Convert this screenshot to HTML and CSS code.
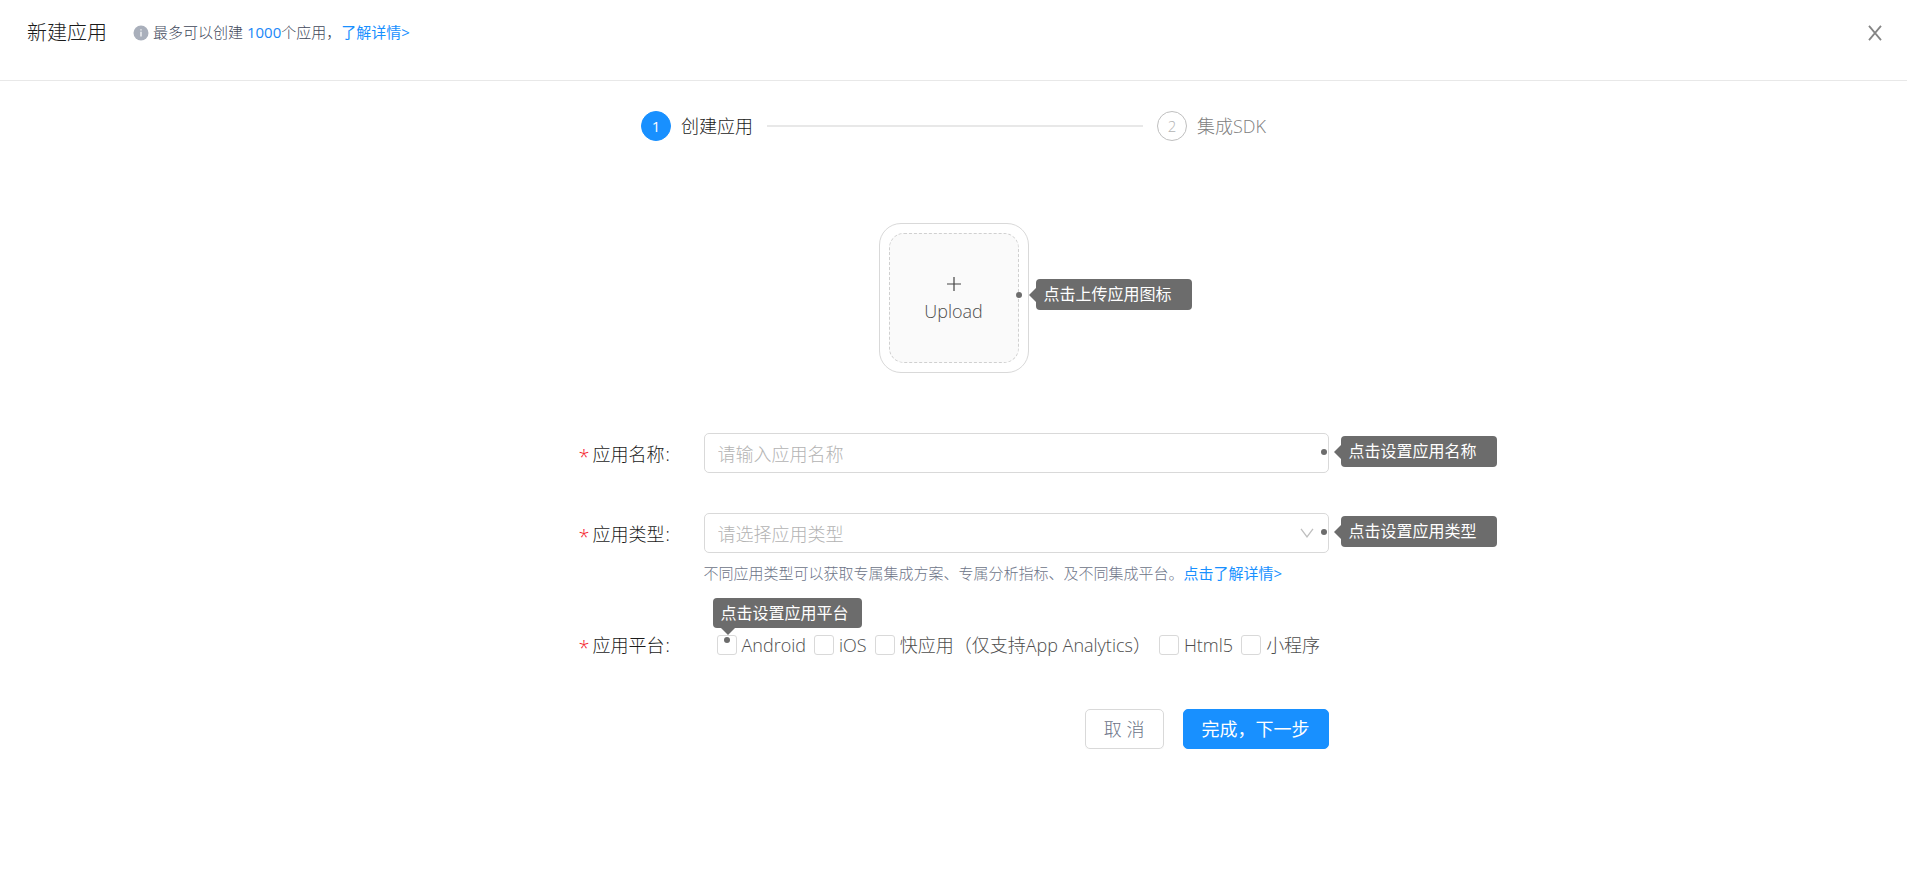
FILE: index.html
```html
<!DOCTYPE html>
<html lang="zh-CN">
<head>
<meta charset="utf-8">
<title>新建应用</title>
<link rel="stylesheet" href="styles.css">
</head>
<body>
<header class="header">
  <h1 class="title">新建应用</h1>
  <p class="quota">
    <svg class="info-icon" viewBox="0 0 16 16" aria-hidden="true"><circle cx="8" cy="8" r="7.5" fill="#a9afbb"/><path d="M8 6.8v4.6M8 4.2v1.4" stroke="#fff" stroke-width="1.2"/></svg>
    <span>最多可以创建 <strong class="count">1000</strong>个应用，<a class="link" href="#">了解详情&gt;</a></span>
  </p>
  <button class="close" type="button" aria-label="关闭"><svg viewBox="0 0 14 16" aria-hidden="true"><path d="M1 .8l12 14.4M13 .8L1 15.2" fill="none" stroke="#858585" stroke-width="1.8"/></svg></button>
</header>
<main class="main">
  <ol class="steps">
    <li class="step step-active"><span class="step-num">1</span><span class="step-name">创建应用</span></li>
    <li class="step-line" aria-hidden="true"></li>
    <li class="step"><span class="step-num">2</span><span class="step-name">集成SDK</span></li>
  </ol>

  <div class="upload-frame">
    <button class="upload" type="button">
      <svg class="plus" viewBox="0 0 14 14" aria-hidden="true"><path d="M7 0v14M0 7h14" stroke="#444" stroke-width="1.2"/></svg>
      <span>Upload</span>
    </button>
    <span class="dot dot-upload"></span>
    <span class="tip tip-side tip-upload">点击上传应用图标</span>
  </div>

  <form class="form">
    <div class="row">
      <label class="label" for="name"><span class="star">*</span>应用名称<span class="colon">:</span></label>
      <div class="control">
        <input class="field" id="name" type="text" placeholder="请输入应用名称">
        <span class="dot dot-field"></span>
        <span class="tip tip-side tip-field">点击设置应用名称</span>
      </div>
    </div>
    <div class="row">
      <label class="label" for="type"><span class="star">*</span>应用类型<span class="colon">:</span></label>
      <div class="control">
        <select class="field select" id="type"><option>请选择应用类型</option></select>
        <svg class="arrow" viewBox="0 0 14 10" aria-hidden="true"><path d="M1 .8l6 8 6-8" fill="none" stroke="#bfbfbf" stroke-width="1.3"/></svg>
        <span class="dot dot-field"></span>
        <span class="tip tip-side tip-field">点击设置应用类型</span>
      </div>
      <p class="hint">不同应用类型可以获取专属集成方案、专属分析指标、及不同集成平台。<a class="link" href="#">点击了解详情&gt;</a></p>
    </div>
    <div class="row row-platform" role="group" aria-labelledby="platform">
      <span class="label" id="platform"><span class="star">*</span>应用平台<span class="colon">:</span></span>
      <div class="control checks">
        <label class="check"><input class="box" type="checkbox">Android</label>
        <label class="check"><input class="box" type="checkbox">iOS</label>
        <label class="check"><input class="box" type="checkbox">快应用（仅支持App Analytics）</label>
        <label class="check"><input class="box" type="checkbox">Html5</label>
        <label class="check"><input class="box" type="checkbox">小程序</label>
        <span class="dot dot-check"></span>
        <span class="tip tip-top">点击设置应用平台</span>
      </div>
    </div>
    <div class="actions">
      <button class="btn" type="button">取 消</button>
      <button class="btn btn-primary" type="submit">完成，下一步</button>
    </div>
  </form>
</main>
</body>
</html>
```
FILE: styles.css
```css
* { box-sizing: border-box; }
body {
  margin: 0;
  background: #fff;
  color: #4d4d4d;
  font: 300 18px/28px "Open Sans", "Noto Sans CJK SC", sans-serif;
}
button, input, select { font: inherit; color: inherit; margin: 0; }
.header {
  display: flex;
  align-items: center;
  padding: 17px 25px 32px 27px;
  border-bottom: 1px solid #e8e8e8;
}
.title { margin: 0 26px 0 0; font-size: 20px; line-height: 31px; font-weight: 300; color: #1a1a1a; }
.quota { display: flex; align-items: center; gap: 4px; margin: 0; font-size: 15px; line-height: 31px; color: #40475a; }
.info-icon { width: 16px; height: 16px; }
.count { font-weight: 400; color: #1a88f8; }
.link { color: #1890ff; text-decoration: none; font-weight: 400; }
.close { display: flex; margin-left: auto; padding: 0; border: 0; background: none; }
.close svg { width: 14px; height: 16px; }

.main { display: flex; flex-direction: column; align-items: center; padding-top: 30px; }
.steps { display: flex; align-items: center; width: 625px; margin: 0; padding: 0; list-style: none; }
.step { display: flex; align-items: center; gap: 10px; color: #808080; }
.step-num {
  display: flex;
  align-items: center;
  justify-content: center;
  width: 30px;
  height: 30px;
  border: 1px solid #bfbfbf;
  border-radius: 50%;
  font-size: 15px;
  color: #b3b3b3;
}
.step-active { color: #1a1a1a; }
.step-active .step-num { border-color: #1890ff; background: #1890ff; color: #fff; font-weight: 400; }
.step-line { flex: 1; height: 2px; margin: 0 14px; background: #e8e8e8; }

.upload-frame { position: relative; margin-top: 82px; padding: 9px; border: 1px solid #d9d9d9; border-radius: 22px; }
.upload {
  display: flex;
  flex-direction: column;
  align-items: center;
  justify-content: center;
  gap: 6px;
  width: 130px;
  height: 130px;
  padding: 6px 0 0;
  border: 1px dashed #d0d0d0;
  border-radius: 15px;
  background: #fafafa;
}
.plus { width: 14px; height: 14px; }

.form { width: 750px; margin-top: 60px; }
.row { display: grid; grid-template-columns: 125px 1fr; margin-bottom: 40px; }
.label { display: flex; align-items: center; height: 40px; padding-top: 2px; color: #1a1a1a; }
.star { width: 14px; padding-top: 6px; font-size: 20px; color: #f5222d; }
.colon { margin-left: 1px; }
.control { position: relative; }
.field {
  display: block;
  width: 100%;
  height: 40px;
  padding: 2px 13px 0;
  border: 1px solid #d9d9d9;
  border-radius: 5px;
  background: #fff;
  outline: none;
}
.field::placeholder { color: #b3b3b3; opacity: 1; }
.select { appearance: none; color: #b3b3b3; }
.arrow { position: absolute; top: 15px; right: 15px; width: 14px; height: 10px; pointer-events: none; }
.hint { grid-column: 2; margin: 6px 0 0; font-size: 15px; line-height: 28px; color: #6c7387; white-space: nowrap; }
.row-platform { margin: -2px 0 44px; }
.row-platform .label { padding-top: 0; }
.checks { display: flex; align-items: center; gap: 8px; padding-left: 13px; white-space: nowrap; }
.check { display: flex; align-items: center; gap: 5px; }
.box { appearance: none; width: 20px; height: 20px; border: 1px solid #d9d9d9; border-radius: 3px; background: #fff; }
.actions { display: flex; justify-content: flex-end; gap: 19px; }
.btn {
  height: 40px;
  padding: 0 18px;
  border: 1px solid #d9d9d9;
  border-radius: 5px;
  background: #fff;
  color: #6c7387;
  box-shadow: 0 2px 0 rgba(0, 0, 0, 0.02);
}
.btn-primary { border-color: #1890ff; background: #1890ff; color: #fff; font-weight: 400; }

.dot { position: absolute; width: 6px; height: 6px; border-radius: 50%; background: #6c6c6c; }
.tip {
  position: absolute;
  padding: 0 20px 0 8px;
  border-radius: 4px;
  background: #6c6c6c;
  color: #fff;
  font-size: 16px;
  line-height: 31px;
  font-weight: 400;
  white-space: nowrap;
}
.tip::before { content: ""; position: absolute; border: 7px solid transparent; }
.tip-side::before { right: 100%; top: 9px; border-right-color: #6c6c6c; border-left: 0; }
.dot-upload { right: 6px; top: 68px; }
.tip-upload { left: 156px; top: 55px; }
.dot-field { right: 2px; top: 16px; }
.tip-field { left: calc(100% + 12px); top: 3px; }
.dot-check { left: 20px; top: 12px; }
.tip-top { left: 9px; bottom: 37px; padding-right: 13px; line-height: 30px; }
.tip-top::before { left: 8px; top: 100%; border-top-color: #6c6c6c; border-bottom: 0; }
```
